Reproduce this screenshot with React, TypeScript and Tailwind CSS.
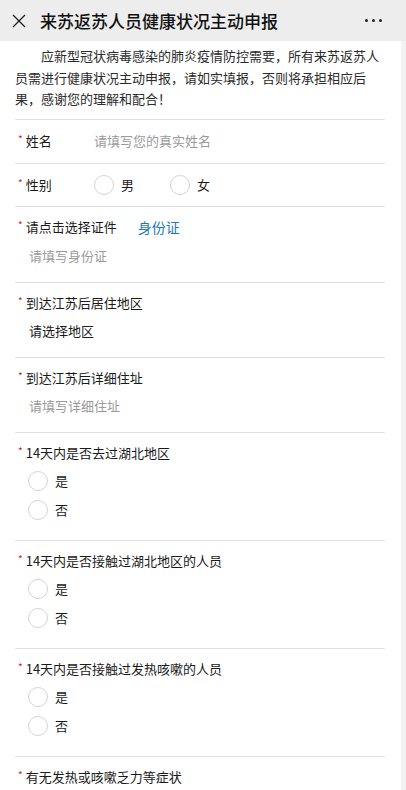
const font = { fontFamily: '"Noto Sans CJK SC", "Noto Sans", sans-serif' };

function Star() {
  return <span className="mr-[3px] -mt-[4px] text-[10px] leading-none text-[#d0203a]">*</span>;
}

function Label({ children }: { children: React.ReactNode }) {
  return (
    <div className="flex h-[20px] items-center pl-[3px] text-[13px] text-[#1a1a1a]">
      <Star />
      {children}
    </div>
  );
}

function Circle() {
  return <span className="h-[20px] w-[20px] rounded-full border border-[#d4d4d4] bg-white" />;
}

function RadioQuestion({ title }: { title: string }) {
  return (
    <div className="border-b border-[#dedede] pt-[10px] pb-[19px]">
      <Label>{title}</Label>
      <div className="mt-[7px] flex flex-col gap-[7px] pl-[13px]">
        {["是", "否"].map((o) => (
          <div key={o} className="flex h-[22px] items-center gap-[7px] text-[13px] text-[#1a1a1a]">
            <Circle />
            {o}
          </div>
        ))}
      </div>
    </div>
  );
}

function InputQuestion({ title, value, dark, extra }: { title: string; value: string; dark?: boolean; extra?: string }) {
  return (
    <div className="border-b border-[#dedede] pt-[10px] pb-[16px]">
      <div className="flex items-center">
        <Label>{title}</Label>
        {extra && <span className="ml-[21px] text-[14px] text-[#2177c4]">{extra}</span>}
      </div>
      <div className={`mt-[8px] flex h-[20px] items-center pl-[14px] text-[13px] ${dark ? "text-[#1a1a1a]" : "text-[#9a9a9a]"}`}>
        {value}
      </div>
    </div>
  );
}

export default function App() {
  return (
    <div className="flex h-[790px] w-[406px] flex-col overflow-hidden bg-white" style={font}>
      <header className="flex h-[41px] shrink-0 items-center bg-[#ededed] pl-[12px] pr-[24px]">
        <svg width="14" height="14" viewBox="0 0 14 14" className="shrink-0">
          <path d="M1 1L13 13M13 1L1 13" stroke="#1a1a1a" strokeWidth="1.2" />
        </svg>
        <h1 className="ml-[14px] text-[17px] font-medium text-[#111]">来苏返苏人员健康状况主动申报</h1>
        <div className="ml-auto flex gap-[4px]">
          <span className="h-[3px] w-[3px] rounded-full bg-[#222]" />
          <span className="h-[3px] w-[3px] rounded-full bg-[#222]" />
          <span className="h-[3px] w-[3px] rounded-full bg-[#222]" />
        </div>
      </header>
      <div className="flex flex-1">
        <main className="w-[401px] pl-[15px] pr-[16px]">
          <p className="border-b border-[#dedede] pt-[4px] pb-[9px] indent-[2em] text-[13px] leading-[21.5px] text-[#2b2b2b]">
            应新型冠状病毒感染的肺炎疫情防控需要，所有来苏返苏人员需进行健康状况主动申报，请如实填报，否则将承担相应后果，感谢您的理解和配合！
          </p>
          <div className="flex h-[44px] items-center border-b border-[#dedede]">
            <div className="w-[79px]">
              <Label>姓名</Label>
            </div>
            <span className="text-[13px] text-[#9a9a9a]">请填写您的真实姓名</span>
          </div>
          <div className="flex h-[43px] items-center border-b border-[#dedede]">
            <div className="w-[79px]">
              <Label>性别</Label>
            </div>
            <div className="flex items-center gap-[7px] text-[13px] text-[#1a1a1a]">
              <Circle />男
            </div>
            <div className="ml-[36px] flex items-center gap-[7px] text-[13px] text-[#1a1a1a]">
              <Circle />女
            </div>
          </div>
          <InputQuestion title="请点击选择证件" extra="身份证" value="请填写身份证" />
          <InputQuestion title="到达江苏后居住地区" value="请选择地区" dark />
          <InputQuestion title="到达江苏后详细住址" value="请填写详细住址" />
          <RadioQuestion title="14天内是否去过湖北地区" />
          <RadioQuestion title="14天内是否接触过湖北地区的人员" />
          <RadioQuestion title="14天内是否接触过发热咳嗽的人员" />
          <div className="pt-[10px]">
            <Label>有无发热或咳嗽乏力等症状</Label>
          </div>
        </main>
        <div className="flex-1 bg-[#f3f3f3]" />
      </div>
    </div>
  );
}
